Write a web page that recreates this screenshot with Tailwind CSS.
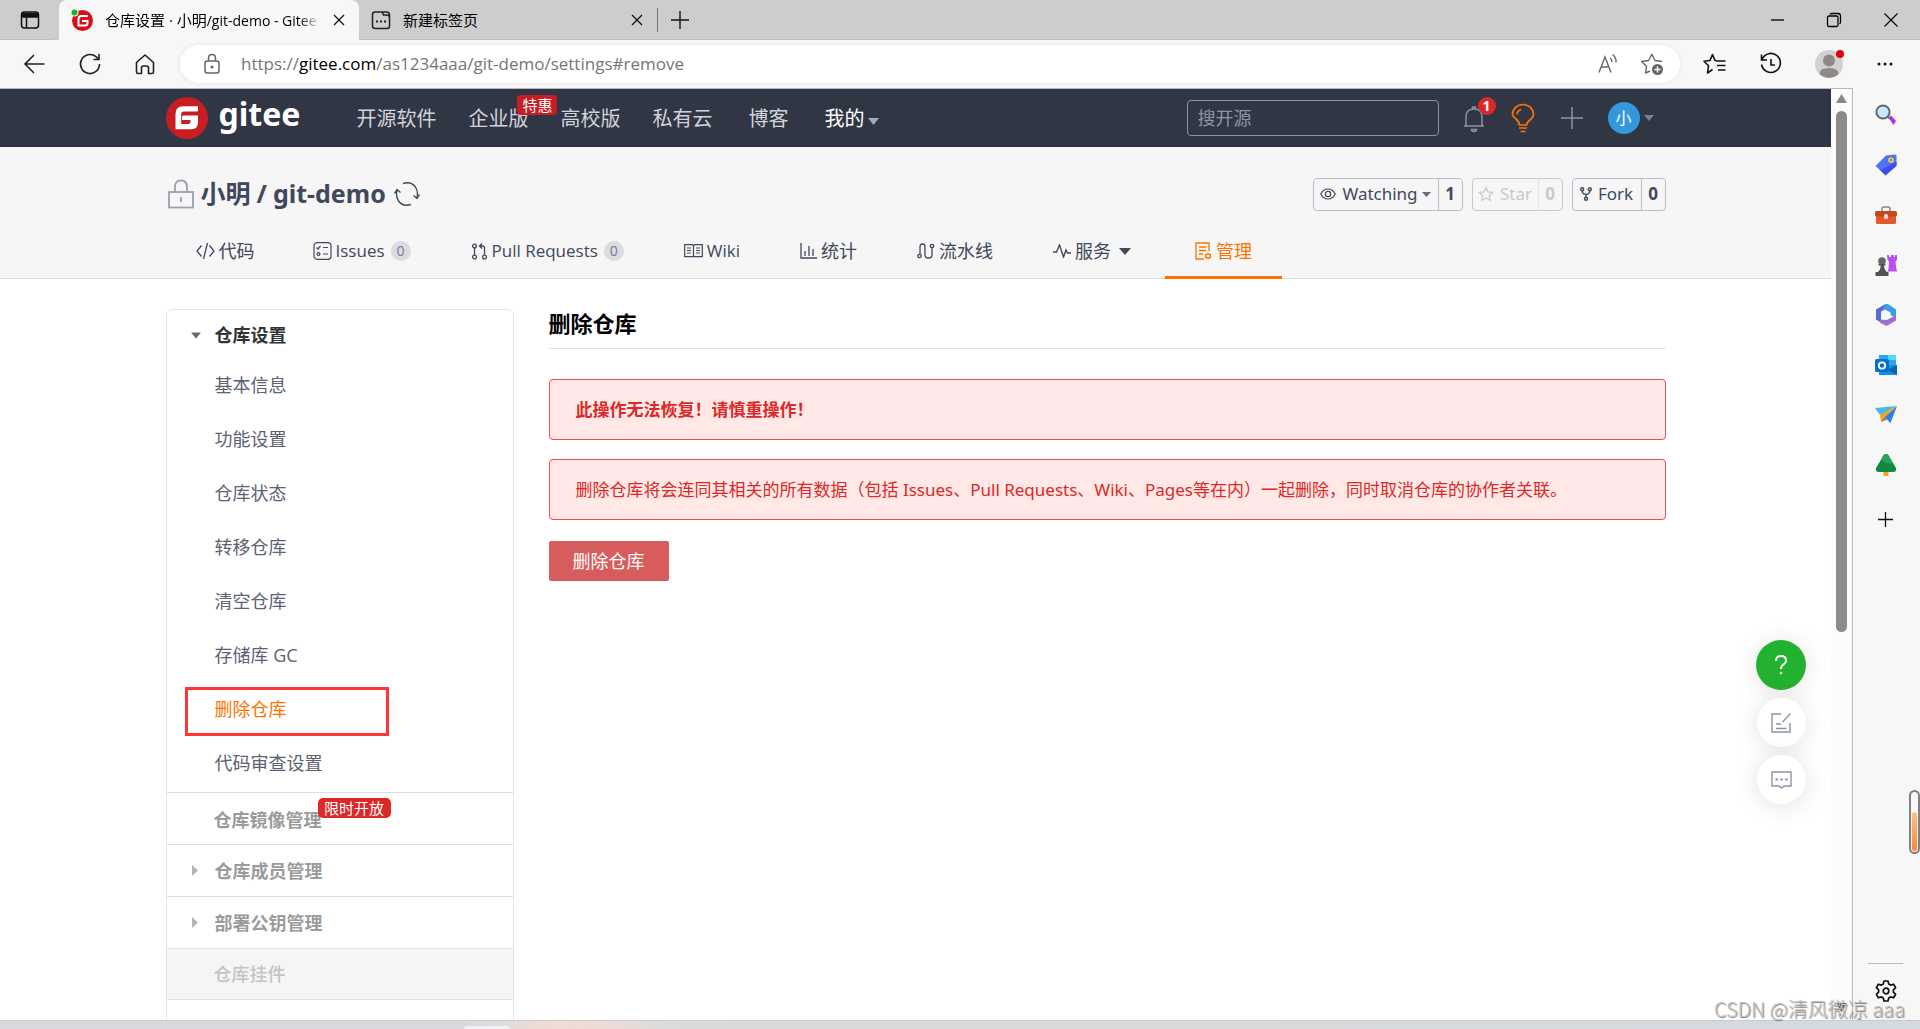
<!DOCTYPE html>
<html lang="zh-CN">
<head>
<meta charset="utf-8">
<meta name="viewport" content="width=device-width, initial-scale=1">
<title>仓库设置 · 小明/git-demo - Gitee</title>
<script src="https://cdn.jsdelivr.net/npm/@tailwindcss/browser@4"></script>
</head>
<body class="relative flex h-screen flex-col overflow-hidden bg-[#f7f7f7] font-['Open_Sans','Noto_Sans_CJK_SC',sans-serif] text-[18px] leading-6 text-[#40485b]">

<!-- Tab strip -->
<header class="flex h-10 shrink-0 items-stretch bg-[#cdcdcd] text-[15px] text-black">
  <button aria-label="标签页操作" class="flex w-[59px] items-center justify-center rounded-br-lg border-b border-[#bdbdbd]">
    <svg class="size-5" viewBox="0 0 20 20" fill="none" stroke="#111" stroke-width="1.5"><rect x="1.5" y="2" width="17" height="16" rx="3"/><path d="M2 3.5h16V7H2z" fill="#111"/><path d="M6.500 7v11"/></svg>
  </button>
  <div class="flex w-[300px] items-center rounded-t-lg bg-[#f7f7f7] pl-[11px] pr-3">
    <svg class="mr-[11px] size-6 shrink-0" viewBox="0 0 24 24"><circle cx="12.500" cy="12.500" r="10.500" fill="#d8101c"/><path d="M18 8h-6.500q-3 0-3 3v6.500h6.500q2.500 0 2.500-2.500v-2h-5.500" fill="none" stroke="#fff" stroke-width="2"/><circle cx="4.500" cy="4.500" r="4" fill="#f7f7f7"/><circle cx="4.500" cy="4.500" r="3" fill="#0eb82c"/></svg>
    <span class="min-w-0 flex-1 overflow-hidden whitespace-nowrap [mask-image:linear-gradient(to_right,black_90%,transparent)]">仓库设置 · 小明<span class="text-[14px]">/git-demo - Gitee</span></span>
    <button aria-label="关闭标签页" class="ml-2.5 flex size-4 shrink-0 items-center justify-center"><svg class="size-3" viewBox="0 0 12 12" stroke="#111" stroke-width="1.300"><path d="M1 1l10 10M11 1L1 11"/></svg></button>
  </div>
  <div class="flex w-[298px] items-center border-b border-[#bdbdbd] pl-3 pr-3">
    <svg class="mr-3 size-5 shrink-0" viewBox="0 0 20 20" fill="none" stroke="#222" stroke-width="1.500"><path d="M4.500 2H11l1.500 3H16q2.500 0 2.500 2.500V16q0 2.500-2.500 2.500H4.500Q1.500 18.500 1.500 16V4.500Q1.500 2 4.500 2zM11 2h4.500q3 0 3 3v3"/><path d="M5 11.500h2M9 11.500h2M13 11.500h2" stroke-width="2"/></svg>
    <span class="flex-1 whitespace-nowrap">新建标签页</span>
    <button aria-label="关闭标签页" class="flex size-4 items-center justify-center"><svg class="size-3" viewBox="0 0 12 12" stroke="#111" stroke-width="1.300"><path d="M1 1l10 10M11 1L1 11"/></svg></button>
  </div>
  <div class="flex flex-1 items-center border-b border-[#bdbdbd]">
    <span class="h-6 w-px bg-[#777]"></span>
    <button aria-label="新建标签页" class="ml-3 flex size-5 items-center justify-center"><svg class="size-[18px]" viewBox="0 0 18 18" stroke="#111" stroke-width="1.400"><path d="M9 0v18M0 9h18"/></svg></button>
    <div class="ml-auto flex items-center">
      <button aria-label="最小化" class="flex w-[57px] justify-center"><svg class="size-4" viewBox="0 0 16 16" stroke="#000" stroke-width="1.300"><path d="M2 8h13"/></svg></button>
      <button aria-label="还原" class="flex w-[57px] justify-center"><svg class="size-4" viewBox="0 0 16 16" fill="none" stroke="#000" stroke-width="1.300"><rect x="1.500" y="4" width="10.500" height="10.500" rx="1.500"/><path d="M4 2.500Q4.500 1.500 6 1.500h6q2.500 0 2.500 2.500v6q0 1.500-1 2"/></svg></button>
      <button aria-label="关闭" class="flex w-[58px] justify-center"><svg class="size-4" viewBox="0 0 16 16" stroke="#000" stroke-width="1.100"><path d="M1.500 1.500l13 13M14.500 1.500l-13 13"/></svg></button>
    </div>
  </div>
</header>

<!-- Toolbar -->
<div class="flex h-12 shrink-0 items-center">
  <div class="flex w-[180px] shrink-0 items-center gap-[31px] pl-[23px]">
    <button aria-label="后退"><svg class="size-6" viewBox="0 0 24 24" fill="none" stroke="#222" stroke-width="1.600"><path d="M21.500 12H2M11 3l-9 9 9 9"/></svg></button>
    <button aria-label="刷新"><svg class="size-6" viewBox="0 0 24 24" fill="none" stroke="#222" stroke-width="1.600"><path d="M21.500 12a9.500 9.500 0 1 1-3.500-7.300L20.500 7M21 2v5.500h-5.500"/></svg></button>
    <button aria-label="主页"><svg class="size-6" viewBox="0 0 24 24" fill="none" stroke="#222" stroke-width="1.600" stroke-linejoin="round"><path d="M3.500 10.500L12 3l8.500 7.500V20q0 1.500-1.500 1.500h-3.500V16q0-2-2-2h-3q-2 0-2 2v5.500H5q-1.500 0-1.500-1.500z"/></svg></button>
  </div>
  <div class="flex h-[38px] flex-1 items-center rounded-full bg-white pl-5 pr-4 text-[17px] text-[#757575] shadow-[0_0_5px_rgba(0,0,0,0.08)]">
    <svg class="mr-[17px] size-6" viewBox="0 0 24 24" fill="none" stroke="#666" stroke-width="1.500"><rect x="5" y="9" width="14" height="12" rx="2.500"/><path d="M8.500 9V6q0-3.500 3.500-3.500T15.500 6v3"/><circle cx="12" cy="15" r=".8" fill="#666"/></svg>
    <div class="flex-1">https://<span class="text-black">gitee.com</span>/as1234aaa/git-demo/settings#remove</div>
    <button aria-label="大声朗读" class="mr-5"><svg class="size-6" viewBox="0 0 24 24" fill="none" stroke="#666" stroke-width="1.400"><path d="M3 20.500L9 5l6 15.500M5 15h8M14 6q2 1.500 2 4M16.500 2.500q4 3 3.500 8"/></svg></button>
    <button aria-label="收藏"><svg class="size-6" viewBox="0 0 24 24" fill="none" stroke="#666" stroke-width="1.400" stroke-linejoin="round"><path d="M22 9.500l-7-1-3.200-6.300-3.200 6.300-7 1 5 5L5.500 21l4.500-2"/><circle cx="17.500" cy="17.500" r="5.500" fill="#666" stroke="none"/><path d="M17.500 14.500v6M14.500 17.500h6" stroke="#fff"/></svg></button>
  </div>
  <div class="flex w-[240px] shrink-0 items-center justify-between pl-[23px] pr-[25px]">
    <button aria-label="收藏夹"><svg class="size-6" viewBox="0 0 24 24" fill="none" stroke="#111" stroke-width="1.600" stroke-linejoin="round"><path d="M13 8.500h-1L9.500 2.500 7 8.500l-6 .8 4.500 4.500L4.500 21l5-3.500M13 9h9.500M14 13.500h8.500M15 18h7.500"/></svg></button>
    <button aria-label="历史记录"><svg class="size-6" viewBox="0 0 24 24" fill="none" stroke="#111" stroke-width="1.600"><path d="M2.500 2.500V8H8M3 7.500a9.500 9.500 0 1 1-.5 5M12 7v6h4"/></svg></button>
    <button aria-label="个人资料" class="relative"><svg class="size-7" viewBox="0 0 28 28"><circle cx="14" cy="14" r="14" fill="#d3d0cd"/><circle cx="14" cy="10.500" r="6" fill="#8e8985"/><path d="M4.500 24q0-6 9.500-6t9.500 6A14 14 0 0 1 4.500 24" fill="#8e8985"/></svg><span class="absolute -right-px top-0 size-2 rounded-full bg-[#e3000f]"></span></button>
    <button aria-label="设置及其他"><svg class="size-5" viewBox="0 0 20 20" fill="#111"><circle cx="4" cy="10" r="1.500"/><circle cx="10" cy="10" r="1.500"/><circle cx="16" cy="10" r="1.500"/></svg></button>
  </div>
</div>

<div class="flex min-h-0 flex-1">
  <!-- Page -->
  <div class="relative min-w-0 flex-1 overflow-hidden border-t border-[#b9b9b9] bg-white">
    <div class="bg-[#313644]">
      <div class="mx-auto flex h-[58px] max-w-[1500px] items-center text-[20px] text-[#d0d3da]">
        <a href="#" class="flex items-center font-['Noto_Sans',sans-serif] text-[32px] font-bold text-white">
          <svg class="mr-[11px] size-[42px]" viewBox="0 0 42 42"><circle cx="21" cy="21" r="21" fill="#c71d23"/><path d="M32 9.300H17q-7.500 0-7.500 7.500v15.500h15.500q7 0 7-7V18.500H17.500q-1.500 0-1.500 1.500v3h8.500V25q0 2-2 2h-7.300v-10q0-2.500 2.500-2.500H31q1 0 1-1z" fill="#fff"/></svg>
          <span class="-mt-2">gitee</span>
        </a>
        <nav class="ml-14 flex items-center pt-0.5">
          <a href="#" class="mr-8">开源软件</a>
          <a href="#" class="relative mr-8">企业版<span class="absolute -top-3 left-[49px] z-10 flex h-5 w-10 items-center justify-center rounded-sm bg-[#c71d23] text-[15px] text-white">特惠</span></a>
          <a href="#" class="mr-8">高校版</a>
          <a href="#" class="mr-9">私有云</a>
          <a href="#" class="mr-9">博客</a>
          <a href="#" class="flex items-center gap-1 text-white">我的<svg class="mt-1 h-[7px] w-[11px]" viewBox="0 0 11 7"><path d="M0 0h11L5.500 7z" fill="#a7aab2"/></svg></a>
        </nav>
        <div class="ml-auto flex items-center">
          <input type="search" aria-label="搜开源" placeholder="搜开源" class="h-9 w-[252px] rounded-sm border border-[#8c92a4] bg-transparent px-[10px] text-[18px] text-white placeholder:text-[#8f95a3]">
          <a href="#" aria-label="通知" class="relative ml-[21px]"><svg class="h-[30px] w-7" viewBox="0 0 28 30" fill="none" stroke="#8c92a4" stroke-width="1.500"><path d="M4 23h20M6 23v-9q0-8 8-8t8 8v9M12.500 6V4h3v2M11.500 26.500q0 2 2.500 2t2.500-2z"/></svg><span class="absolute -right-2 -top-1.5 flex size-[18px] items-center justify-center rounded-full bg-[#db2828] text-[14px] font-bold text-white">1</span></a>
          <a href="#" aria-label="活动" class="ml-[23px]"><svg class="h-[30px] w-6" viewBox="0 0 24 30" fill="none" stroke="#fe7300" stroke-width="1.700"><path d="M8.500 22q0-3-3.500-6T1.500 11.500a10.500 10 0 0 1 21 0Q22.500 14 19 17t-3.500 5zM8 25h8M9.500 28.500h5M6 11.500q0-3.500 4-5"/></svg></a>
          <a href="#" aria-label="新建" class="ml-[26px]"><svg class="size-[22px]" viewBox="0 0 22 22" stroke="#8c92a4" stroke-width="1.500"><path d="M11 0v22M0 11h22"/></svg></a>
          <a href="#" class="ml-[25px] flex items-center gap-1"><span class="flex size-8 items-center justify-center rounded-full bg-[#3598db] text-[16px] text-white">小</span><svg class="h-[6px] w-[10px]" viewBox="0 0 10 6"><path d="M0 0h10L5 6z" fill="#7a8090"/></svg></a>
          <span class="w-3"></span>
        </div>
      </div>
    </div>

    <!-- Repository heading -->
    <div class="border-b border-[#dcdddd] bg-[#f6f6f6]">
      <div class="mx-auto h-[131px] max-w-[1500px]">
        <div class="flex items-center pt-[30px]">
          <h1 class="flex h-[34px] items-center font-['Noto_Sans','Noto_Sans_CJK_SC',sans-serif] text-[25px] font-bold text-[#40485b]">
            <svg class="ml-px mr-1.5 h-[30px] w-7" viewBox="0 0 28 30" fill="none" stroke="#9ba0b2" stroke-width="1.800"><rect x="2" y="13" width="24" height="15.500"/><path d="M8 13V8q0-6.500 6-6.500T20 8v5M14 18v5"/></svg>
            <span class="flex pb-0.5"><a href="#">小明</a><span class="mx-1.5">/</span><a href="#">git-demo</a></span>
            <button aria-label="同步" class="ml-2"><svg class="size-[26px]" viewBox="0 0 26 26" fill="none" stroke="#40485b" stroke-width="1.400"><path d="M9 2.500q8-2.500 12.500 3.500 3 5 1.500 11M17 23.500q-8 2.500-12.500-3.500-3-5-1.500-11M25.500 13.500L23 17.500l-3.500-3M.5 12.500L3 8.500l3.500 3"/></svg></button>
          </h1>
          <div class="ml-auto flex h-[33px] items-stretch gap-[9px] font-['Noto_Sans',sans-serif] text-[17px]">
            <div class="flex w-[150px] rounded-sm border border-[#b9bcc9]"><button class="flex flex-1 items-center justify-center gap-1.5"><svg class="h-3 w-4" viewBox="0 0 16 12" fill="none" stroke="#40485b" stroke-width="1.200"><path d="M.7 6Q3.500 1 8 1t7.300 5Q12.500 11 8 11T.7 6z"/><circle cx="8" cy="6" r="2.700"/></svg><span class="-mr-0.5">Watching</span><svg class="h-[5px] w-[9px]" viewBox="0 0 9 5"><path d="M0 0h9L4.500 5z" fill="#666d7d"/></svg></button><a href="#" class="flex w-6 items-center justify-center border-l border-[#b9bcc9] font-bold">1</a></div>
            <div class="flex w-[91px] rounded-sm border border-[#c6c8d2] text-[#c9c9cc]"><button class="flex flex-1 items-center justify-center gap-1.5"><svg class="size-4" viewBox="0 0 16 16" fill="none" stroke="#c9c9cc" stroke-width="1.300"><path d="M8 1.500l2 4.300 4.700.6-3.400 3.200.8 4.700L8 12l-4.100 2.300.8-4.700L1.300 6.400 6 5.800z"/></svg>Star</button><a href="#" class="flex w-6 items-center justify-center border-l border-[#e2e3e6] font-bold">0</a></div>
            <div class="flex w-[94px] rounded-sm border border-[#b9bcc9]"><button class="flex flex-1 items-center justify-center gap-1.5"><svg class="h-[14px] w-3" viewBox="0 0 12 14" fill="none" stroke="#40485b" stroke-width="1.400"><circle cx="2.200" cy="2.200" r="1.500"/><circle cx="9.800" cy="2.200" r="1.500"/><circle cx="6" cy="11.800" r="1.500"/><path d="M2.200 4q0 3 3.800 3.500 3.800-.5 3.800-3.500M6 7.500v3"/></svg>Fork</button><a href="#" class="flex w-6 items-center justify-center border-l border-[#b9bcc9] font-bold">0</a></div>
          </div>
        </div>

        <nav class="mt-3.5 flex h-[54px] items-center">
          <a href="#" class="flex h-full items-center gap-1 pb-0.5 pl-[30px] pr-7"><svg class="h-4 w-[19px]" viewBox="0 0 19 16" fill="none" stroke="#40485b" stroke-width="1.300"><path d="M5.500 2.500L1 8l4.500 5.500M13.500 2.500L18 8l-4.500 5.500M11.500 0l-4 16"/></svg>代码</a>
          <a href="#" class="flex h-full items-center gap-1 px-[30px] pb-0.5"><svg class="h-[18px] w-[19px]" viewBox="0 0 19 18" fill="none" stroke="#40485b" stroke-width="1.200"><rect x="1" y=".7" width="17" height="16.600" rx="3"/><path d="M3.500 5.500L5 7l2.500-3M10 5.500h5M10 12h5"/><circle cx="5.500" cy="12" r="1.400"/></svg><span class="text-[17px]">Issues</span><span class="ml-0.5 flex size-5 items-center justify-center rounded-full bg-[#dcdcdc] text-[14px] text-[#6c7ba6]">0</span></a>
          <a href="#" class="flex h-full items-center gap-1 px-[30px] pb-0.5"><svg class="h-[17px] w-[17px]" viewBox="0 0 17 17" fill="none" stroke="#40485b" stroke-width="1.300"><circle cx="3.500" cy="3" r="1.900"/><circle cx="3.500" cy="14" r="1.900"/><circle cx="13.500" cy="14" r="1.900"/><path d="M3.500 5v7M13.500 12V5q0-2-2-2h-3M11 .5L8.500 3 11 5.500"/></svg><span class="text-[17px]">Pull Requests</span><span class="ml-0.5 flex size-5 items-center justify-center rounded-full bg-[#dcdcdc] text-[14px] text-[#6c7ba6]">0</span></a>
          <a href="#" class="flex h-full items-center gap-1 px-[30px] pb-0.5"><svg class="h-[14px] w-[19px]" viewBox="0 0 19 14" fill="none" stroke="#40485b" stroke-width="1.200"><path d="M.7 .7h7.500l1.300 1 1.300-1h7.500v12H.7zM9.500 2v11M3 4h4M3 6.500h4M3 9h4M12 4h4M12 6.500h4M12 9h4"/></svg><span class="text-[17px]">Wiki</span></a>
          <a href="#" class="flex h-full items-center gap-1 px-[30px] pb-0.5"><svg class="h-4 w-[17px]" viewBox="0 0 17 16" fill="none" stroke="#40485b" stroke-width="1.300"><path d="M1 0v15h16M5 13V8M9 13V3M13 13V6"/></svg>统计</a>
          <a href="#" class="flex h-full items-center gap-1 px-[30px] pb-0.5"><svg class="h-4 w-[18px]" viewBox="0 0 18 16" fill="none" stroke="#40485b" stroke-width="1.300"><circle cx="2.500" cy="13" r="1.700"/><circle cx="15" cy="3" r="1.700"/><path d="M3 11V4q0-3 2.500-3T8 4v8q0 3 3.500 3t3.500-3V5"/></svg>流水线</a>
          <a href="#" class="flex h-full items-center gap-1 px-[30px] pb-0.5"><svg class="h-[14px] w-[18px]" viewBox="0 0 18 14" fill="none" stroke="#40485b" stroke-width="1.400"><path d="M0 8h3.500L6.500 1l4 12L13 6l1.500 3H18"/></svg>服务<svg class="ml-1 h-[7px] w-3" viewBox="0 0 12 7"><path d="M0 0h12L6 7z" fill="#40485b"/></svg></a>
          <a href="#" class="ml-1 flex h-full items-center gap-1 border-b-[3px] border-[#fe7300] px-[30px] text-[#fe7300]"><svg class="h-[18px] w-[17px]" viewBox="0 0 17 18" fill="none" stroke="#fe7300" stroke-width="1.300"><path d="M14 9V1H1v16h8M4 5h7M4 8.500h7M4 12h4"/><circle cx="13" cy="14" r="2.200"/><path d="M13 10.500v1M13 16.500v1M10 12.300l1 .6M15 15.100l1 .6M10 15.700l1-.6M15 12.900l1-.6"/></svg>管理</a>
        </nav>
      </div>
    </div>

    <div class="mx-auto flex max-w-[1500px] items-start gap-[35px] pt-[30px]">
      <!-- Settings menu -->
      <aside class="h-[760px] w-[348px] shrink-0 rounded-t-md border border-[#e1e5e9]">
        <a href="#" class="flex h-12 items-center pl-6 pt-0.5 font-bold text-[#333]"><svg class="mr-[14px] h-[7px] w-[10px]" viewBox="0 0 10 6"><path d="M0 0h10L5 6z" fill="#6b6b6b"/></svg>仓库设置</a>
        <ul class="pb-0.5 text-[#5b6272]">
          <li class="flex h-[54px] items-center pl-12"><a href="#">基本信息</a></li>
          <li class="flex h-[54px] items-center pl-12"><a href="#">功能设置</a></li>
          <li class="flex h-[54px] items-center pl-12"><a href="#">仓库状态</a></li>
          <li class="flex h-[54px] items-center pl-12"><a href="#">转移仓库</a></li>
          <li class="flex h-[54px] items-center pl-12"><a href="#">清空仓库</a></li>
          <li class="flex h-[54px] items-center pl-12"><a href="#">存储库 GC</a></li>
          <li class="relative flex h-[54px] items-center pl-12 text-[#fe7300]"><a href="#">删除仓库</a><span class="pointer-events-none absolute left-[18px] top-[5px] h-[49px] w-[204px] border-[3px] border-[#ff3636]"></span></li>
          <li class="flex h-[54px] items-center pl-12"><a href="#">代码审查设置</a></li>
        </ul>
        <a href="#" class="relative flex h-[52px] items-center border-t border-[#dcdfe0] pl-[47px] pt-0.5 font-bold text-[#9b9b9b]">仓库镜像管理<span class="absolute left-[151px] top-[5px] flex h-5 w-[73px] items-center justify-center rounded-[5px] bg-[#db2828] text-[15px] font-normal text-white">限时开放</span></a>
        <a href="#" class="flex h-[52px] items-center border-t border-[#dcdfe0] pl-[25px] font-bold text-[#9b9b9b]"><svg class="mr-[17px] h-[11px] w-[6px]" viewBox="0 0 6 11"><path d="M0 0l6 5.500L0 11z" fill="#b5b5b5"/></svg>仓库成员管理</a>
        <a href="#" class="flex h-[52px] items-center border-t border-[#dcdfe0] pl-[25px] font-bold text-[#9b9b9b]"><svg class="mr-[17px] h-[11px] w-[6px]" viewBox="0 0 6 11"><path d="M0 0l6 5.500L0 11z" fill="#b5b5b5"/></svg>部署公钥管理</a>
        <a href="#" class="flex h-[52px] items-center border-y border-[#dfe1e2] bg-[#f5f5f5] pl-[47px] font-medium text-[#c4c4c4]">仓库挂件</a>
      </aside>

      <!-- Danger zone -->
      <main class="min-w-0 flex-1 font-['Noto_Sans','Noto_Sans_CJK_SC',sans-serif] text-[17px] text-[#db2828]">
        <h2 class="border-b border-[#e3e4e5] pb-[11px] text-[22px] font-bold leading-7 text-black">删除仓库</h2>
        <div class="mt-[30px] flex min-h-[61px] items-center rounded border border-[#e05252] bg-[#ffe8e6] px-[26px] font-bold">此操作无法恢复！请慎重操作！</div>
        <div class="mt-[19px] flex min-h-[61px] items-center rounded border border-[#e05252] bg-[#ffe8e6] px-[26px]">删除仓库将会连同其相关的所有数据（包括 Issues、Pull Requests、Wiki、Pages等在内）一起删除，同时取消仓库的协作者关联。</div>
        <button class="mt-[21px] h-10 w-[120px] rounded-xs bg-[#d95c5c] text-[18px] text-white">删除仓库</button>
      </main>
    </div>

    <!-- Floating help buttons -->
    <div class="absolute right-[25px] top-[551px] flex flex-col gap-2">
      <button aria-label="帮助" class="flex size-[50px] items-center justify-center rounded-full bg-[#23b130] text-white shadow-[0_2px_24px_rgba(0,0,0,0.12)]"><svg class="h-5 w-3" viewBox="0 0 12 20" fill="none" stroke="#fff" stroke-width="2"><path d="M1 6q0-5 5-5t5 4.500Q11 8 8.500 9.500T6 14"/><circle cx="6" cy="18" r=".9" fill="#fff" stroke-width="1"/></svg></button>
      <button aria-label="反馈" class="flex size-[49px] items-center justify-center self-center rounded-full bg-white shadow-[0_2px_24px_rgba(0,0,0,0.12)]"><svg class="size-5" viewBox="0 0 20 20" fill="none" stroke="#8c92a4" stroke-width="1.400"><path d="M10 1H1v18h18v-9M19.500 .5L11.500 9M5 11h5M5 15.500h10.500"/></svg></button>
      <button aria-label="留言" class="flex size-[49px] items-center justify-center self-center rounded-full bg-white shadow-[0_2px_24px_rgba(0,0,0,0.12)]"><svg class="h-[18px] w-[21px]" viewBox="0 0 21 18" fill="none" stroke="#8c92a4" stroke-width="1.400"><path d="M1 1h19v14h-7L10.500 17 8 15H1z"/><path d="M4.500 8.500H7M9.300 8.500h2.500M14.200 8.500h2.500" stroke-width="2.200"/></svg></button>
    </div>
  </div>

  <!-- Scroll bar -->
  <div class="flex w-[22px] shrink-0 flex-col items-center border-r border-t border-[#b9b9b9] bg-[#fcfcfc] pt-[5px]">
    <svg class="h-[9px] w-[11px]" viewBox="0 0 11 9"><path d="M5.500 0L11 9H0z" fill="#888"/></svg>
    <span class="mt-2 h-[521px] w-[11px] rounded-full bg-[#8b8b8b]"></span>
    <svg class="mb-2 mt-auto h-[9px] w-[11px]" viewBox="0 0 11 9"><path d="M0 0h11L5.500 9z" fill="#667"/></svg>
  </div>

  <!-- Browser side bar -->
  <aside class="flex w-[67px] shrink-0 flex-col items-center pr-0.5 pt-4">
    <div class="flex flex-col gap-[28px]">
      <button aria-label="搜索"><svg class="block size-[22px]" viewBox="0 0 22 22"><path d="M13.500 13.500l2.500-2 5 5.500-2.500 4z" fill="#b22cf0"/><path d="M12 12l3 3" stroke="#777" stroke-width="2"/><circle cx="8" cy="8" r="6.600" fill="#c5e9fc" stroke="#666" stroke-width="2"/></svg></button>
      <button aria-label="购物"><svg class="block size-[22px]" viewBox="0 0 22 22"><path d="M11 1.500L20 .5q1.500 0 1.500 1.500v9L10.500 21 .5 12z" fill="#4c75f4"/><path d="M21.500 8v4L10.500 21.500 5 16z" fill="#3f4cf0"/><circle cx="16" cy="6" r="2" fill="#5478f8" stroke="#fbd13a" stroke-width="1.700"/></svg></button>
      <button aria-label="工具"><svg class="block size-[22px]" viewBox="0 0 22 22"><path d="M7 7V4.500Q7 3 8.500 3h5Q15 3 15 4.500V7" fill="none" stroke="#888" stroke-width="1.500"/><rect x="1" y="9" width="20" height="11" rx="1.500" fill="#e2592b"/><rect y="7" width="22" height="5.500" rx="1.500" fill="#c3481c"/><rect x="9" y="10" width="4" height="5" rx="1.500" fill="#ddd"/></svg></button>
      <button aria-label="游戏"><svg class="block size-[22px]" viewBox="0 0 22 22"><path d="M12 1h2v2h2V1h3v2h1V1h2v5l-1.500 1.500.8 7.500 1.200 2.500H12.500l1-2.500.5-7.500L12.500 6z" fill="#b950f6"/><circle cx="7" cy="7" r="3.800" fill="#666"/><path d="M3.500 10h7v1.500h-1.500q0 4 3 6.500h1.500v4H.5v-4H3q3-3 2.500-6.500h-2z" fill="#505050"/></svg></button>
      <button aria-label="Microsoft 365"><svg class="block size-[22px]" viewBox="0 0 22 22"><path d="M10.500 0L1 5.500v10l5 3V7.500l9-5z" fill="#596bd0"/><path d="M10.500 0q2-.5 4 1l6.500 4.500V14l-5.500-3V8.500L8 4.500z" fill="#37a1e8"/><path d="M21 7v9.500L11.500 22 5 18.500v-3L12 16l9-5z" fill="#9a6fce"/><circle cx="11" cy="11" r="4" fill="#f7f7f7"/></svg></button>
      <button aria-label="Outlook"><svg class="block size-[22px]" viewBox="0 0 22 22"><path d="M4 1h17v10H4z" fill="#28a8ea"/><path d="M13 1h8v5h-8z" fill="#50d9ff"/><path d="M4 11h18v10H4z" fill="#1490df"/><path d="M22 11v10l-10-5z" fill="#0a64b4"/><rect y="5" width="14" height="13" rx="1.500" fill="#0a6dc9"/><circle cx="7" cy="11.500" r="3.200" fill="none" stroke="#fff" stroke-width="1.800"/></svg></button>
      <button aria-label="投递"><svg class="block size-[22px]" viewBox="0 0 22 22"><path d="M22 2L0 4l5 7z" fill="#42b8f5"/><path d="M22 2l-6.500 17-6-6z" fill="#2d7ff0"/><path d="M22 2L5 10.500l1 7.500 3.500-5z" fill="#f5a21b"/><path d="M6 18l3.500-5 2.500 2.500z" fill="#bc7213"/></svg></button>
      <button aria-label="电子树"><svg class="block size-[22px]" viewBox="0 0 22 22"><path d="M8.500 16h5v4.500q0 1.500-1.500 1.500h-2q-1.500 0-1.500-1.500z" fill="#f3a019"/><path d="M11 0Q13.500 0 15 4l6 10q1 4-3 4H4q-4 0-3-4L7 4q1.500-4 4-4z" fill="#128843"/><path d="M11 0Q13.500 0 15 4l3 5q-6 2-12-3l1-2q1.500-4 4-4z" fill="#28a35b"/></svg></button>
    </div>
    <button aria-label="自定义" class="mt-9"><svg class="size-[15px]" viewBox="0 0 15 15" stroke="#111" stroke-width="1.300"><path d="M7.500 0v15M0 7.500h15"/></svg></button>
    <span class="mt-auto h-px w-[35px] bg-[#bcbcbc]"></span>
    <button aria-label="设置" class="mb-[18px] mt-4"><svg class="block size-[22px]" viewBox="0 0 22 22" fill="none" stroke="#111" stroke-width="1.700" stroke-linejoin="round"><path d="M9 1h4l.7 3 1.900 1.100 3-.9 2 3.400-2.200 2.200v2.400l2.200 2.200-2 3.400-3-.9-1.900 1.100L13 21H9l-.7-3-1.900-1.100-3 .9-2-3.400 2.200-2.200V9.800L1.400 7.600l2-3.400 3 .9L8.300 4z"/><circle cx="11" cy="11" r="2.800"/></svg></button>
  </aside>
</div>

<!-- Desktop edge under the window -->
<div class="flex h-[9px] shrink-0 items-end border-t border-[#c9cbcd] bg-[linear-gradient(to_right,#d8dade_0%,#d9dade_24%,#f0ddd4_29%,#ecdcd7_32%,#d9dbdc_35%,#d8dadc_70%,#d3dae2_100%)]">
  <span class="ml-[464px] h-[3px] w-[46px] rounded-t bg-[#f0f1f4]"></span>
</div>

<!-- Volume gauge at the screen edge -->
<div class="absolute right-0 top-[790px] flex h-16 w-[11px] items-end rounded-full border-2 border-[#808080] bg-[#f7f7f7] p-px">
  <span class="h-[39px] w-full rounded-full bg-linear-to-b from-[#fcc182] to-[#fd8535]"></span>
</div>

<p class="absolute bottom-2 right-[15px] font-['Noto_Sans_CJK_SC',sans-serif] text-[20px] font-light leading-6 text-[#c3c3c3] [text-shadow:1px_1px_1px_#777]">CSDN @清风微凉 aaa</p>
</body>
</html>
